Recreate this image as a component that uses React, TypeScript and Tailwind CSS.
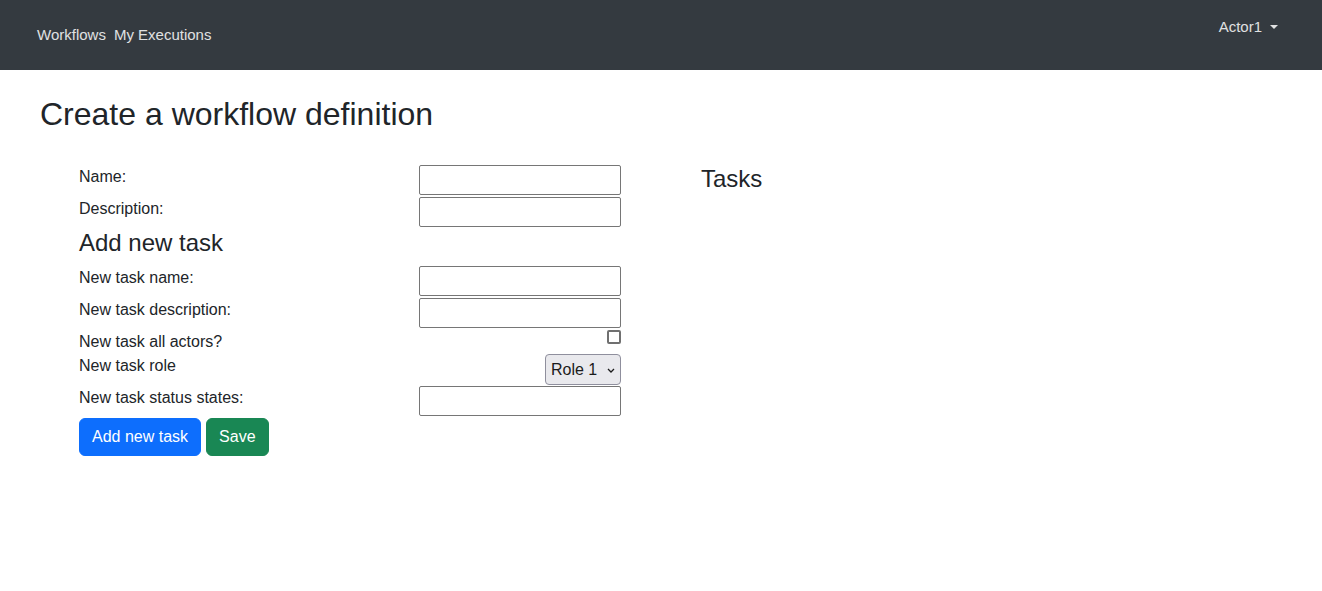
import React from "react";

const font = { fontFamily: '"Liberation Sans", Arial, sans-serif' };

function Row({ label, children, className = "" }: { label: string; children: React.ReactNode; className?: string }) {
  return (
    <div className={`flex justify-between items-start ${className}`}>
      <label className="text-[16px] leading-[24px] text-[#212529]">{label}</label>
      {children}
    </div>
  );
}

function TextInput() {
  return (
    <input
      type="text"
      className="w-[202px] h-[30px] border border-[#767676] rounded-[2px] bg-white px-[2px] text-[16px] outline-none"
    />
  );
}

export default function App() {
  return (
    <div className="min-h-[591px] bg-white" style={font}>
      <nav className="h-[70px] bg-[#343a40] flex justify-between items-start">
        <div className="flex gap-[8px] pl-[37px] pt-[23.5px] text-[15px] leading-[22.5px] text-[#e0e1e2]">
          <a className="cursor-pointer">Workflows</a>
          <a className="cursor-pointer">My Executions</a>
        </div>
        <div className="flex items-start pr-[44px] pt-[16px] text-[15px] leading-[22.5px] text-[#e0e1e2]">
          <span>Actor1</span>
          <svg width="8" height="4" viewBox="0 0 8 4" className="ml-[8px] mt-[8.5px]">
            <polygon points="0,0 8,0 4,4" fill="#e0e1e2" />
          </svg>
        </div>
      </nav>

      <h2 className="ml-[40px] mt-[25px] text-[32px] leading-[38.4px] font-normal text-[#212529]">
        Create a workflow definition
      </h2>

      <div className="flex mt-[31.6px] ml-[79px]">
        <div className="w-[542px] flex flex-col">
          <Row label="Name:">
            <TextInput />
          </Row>
          <Row label="Description:" className="mt-[2px]">
            <TextInput />
          </Row>
          <h4 className="mt-[2px] mb-[8px] text-[24px] leading-[28.8px] font-normal text-[#212529]">Add new task</h4>
          <Row label="New task name:">
            <TextInput />
          </Row>
          <Row label="New task description:" className="mt-[2px]">
            <TextInput />
          </Row>
          <Row label="New task all actors?" className="mt-[2px] h-[24px]">
            <input
              type="checkbox"
              className="appearance-none w-[14px] h-[14px] border-2 border-[#707070] rounded-[2px] bg-white"
            />
          </Row>
          <Row label="New task role" className="h-[32px]">
            <div className="relative">
              <select className="appearance-none w-[76px] h-[31px] border border-[#8f8f9d] rounded-[4px] bg-[#e9e9ed] pl-[5px] pr-[20px] pt-[2px] text-[16px] text-[#1b1b1b] outline-none">
                <option>Role 1</option>
              </select>
              <svg
                width="8"
                height="5"
                viewBox="0 0 8 5"
                className="absolute right-[6px] top-[14px] pointer-events-none"
              >
                <polyline points="1,1 4,4 7,1" fill="none" stroke="#1b1b1b" strokeWidth="1.3" />
              </svg>
            </div>
          </Row>
          <Row label="New task status states:">
            <TextInput />
          </Row>
          <div className="flex gap-[5px] mt-[2px]">
            <button className="h-[38px] px-[12px] rounded-[6px] bg-[#0d6efd] border border-[#0d6efd] text-white text-[16px] leading-[24px]">
              Add new task
            </button>
            <button className="h-[38px] px-[12px] rounded-[6px] bg-[#198754] border border-[#198754] text-white text-[16px] leading-[24px]">
              Save
            </button>
          </div>
        </div>
        <div className="ml-[80px]">
          <h4 className="text-[24px] leading-[28.8px] font-normal text-[#212529]">Tasks</h4>
        </div>
      </div>
    </div>
  );
}
